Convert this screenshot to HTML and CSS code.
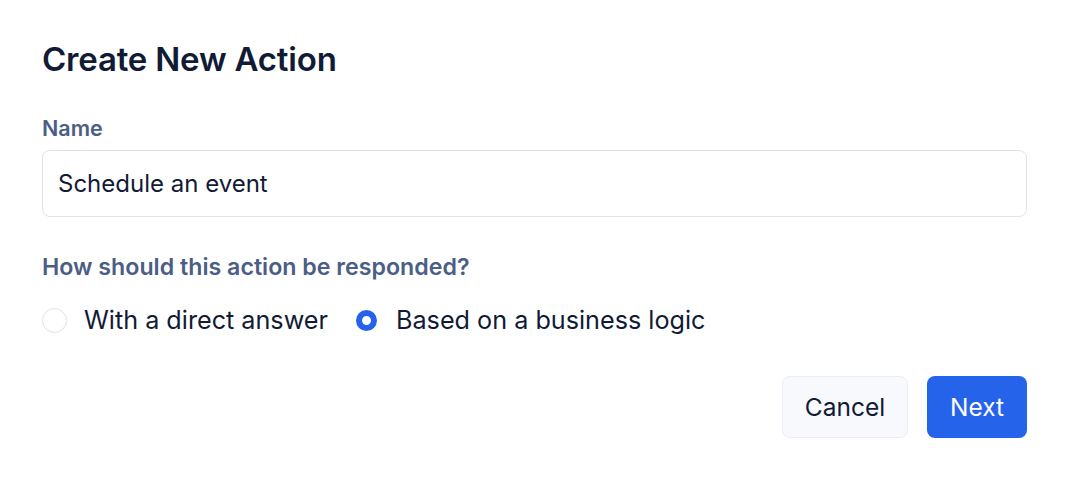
FILE: index.html
```html
<!DOCTYPE html>
<html lang="en">
<head>
<meta charset="utf-8">
<title>Create New Action</title>
<link rel="stylesheet" href="styles.css">
</head>
<body>
<div class="dialog">
  <h1 class="title">Create New Action</h1>
  <div class="field">
    <label class="label label-name" for="name">Name</label>
    <div class="input" id="name">Schedule an event</div>
  </div>
  <div class="field">
    <div class="label label-question">How should this action be responded?</div>
    <div class="radios">
      <div class="radio"><span class="dot"></span><span class="radio-text">With a direct answer</span></div>
      <div class="radio"><span class="dot checked"></span><span class="radio-text">Based on a business logic</span></div>
    </div>
  </div>
  <div class="actions">
    <button class="btn btn-cancel">Cancel</button>
    <button class="btn btn-next">Next</button>
  </div>
</div>
</body>
</html>
```
FILE: styles.css
```css
* { box-sizing: border-box; }
html, body { margin: 0; background: #ffffff; }
body {
  font-family: Inter, "Noto Sans", sans-serif;
  color: #111b36;
}
.dialog {
  width: 1068px;
  height: 480px;
  padding: 38px 41px 0 42px;
  display: flex;
  flex-direction: column;
}
.title {
  margin: 0;
  font-size: 33px;
  font-weight: 600;
  line-height: 42px;
  color: #111b36;
  letter-spacing: -0.2px;
}
.field {
  display: flex;
  flex-direction: column;
}
.title + .field { margin-top: 34px; }
.label {
  font-weight: 600;
  color: #4b5e85;
}
.label-name {
  font-size: 21.5px;
  line-height: 28px;
}
.label-question {
  font-size: 23.2px;
  line-height: 30px;
}
.input {
  margin-top: 8px;
  height: 67px;
  border: 1px solid #e1e3ec;
  border-radius: 8px;
  padding: 0 15px;
  display: flex;
  align-items: center;
  font-size: 24px;
  color: #111b36;
}
.field + .field { margin-top: 35px; }
.radios {
  margin-top: 22px;
  display: flex;
  gap: 26px;
  align-items: center;
}
.radio {
  display: flex;
  align-items: center;
  gap: 17px;
  font-size: 25.2px;
  line-height: 32px;
  color: #111b36;
}
.dot {
  width: 25px;
  height: 25px;
  border-radius: 50%;
  border: 1px solid #dfe2ea;
  background: #fff;
  flex: none;
}
.dot.checked {
  width: 21px;
  height: 21px;
  margin: 0 2px;
  border: 6px solid #2563eb;
}
.actions {
  margin-top: 40px;
  display: flex;
  justify-content: flex-end;
  gap: 19px;
}
.btn {
  height: 62px;
  border-radius: 8px;
  font-family: Inter, "Noto Sans", sans-serif;
  font-size: 24.5px;
  padding: 0;
  cursor: pointer;
}
.btn-cancel {
  width: 126px;
  background: #f7f9fc;
  border: 1px solid #eceef3;
  color: #111b36;
}
.btn-next {
  width: 100px;
  background: #2563eb;
  border: none;
  color: #ffffff;
}
```
